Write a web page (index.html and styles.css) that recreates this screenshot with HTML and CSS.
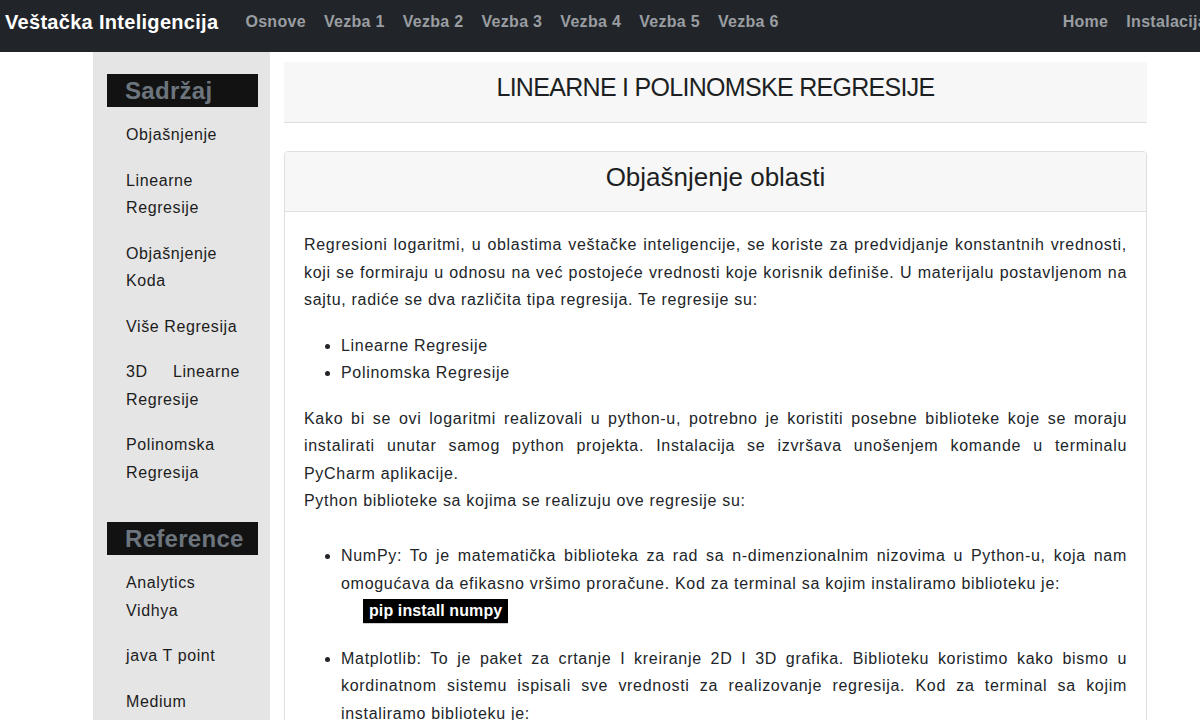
FILE: index.html
```html
<!DOCTYPE html>
<html lang="sr">
<head>
<meta charset="utf-8">
<title>Linearne i polinomske regresije</title>
<link rel="stylesheet" href="styles.css">
</head>
<body>
<nav class="topbar">
  <a class="brand" href="#">Veštačka Inteligencija</a>
  <ul class="nav-links">
    <li><a href="#">Osnove</a></li>
    <li><a href="#">Vezba 1</a></li>
    <li><a href="#">Vezba 2</a></li>
    <li><a href="#">Vezba 3</a></li>
    <li><a href="#">Vezba 4</a></li>
    <li><a href="#">Vezba 5</a></li>
    <li><a href="#">Vezba 6</a></li>
  </ul>
  <ul class="nav-links nav-right">
    <li><a href="#">Home</a></li>
    <li><a href="#">Instalacija</a></li>
  </ul>
</nav>

<div class="layout">
  <aside class="sidebar">
    <h3 class="side-title">Sadržaj</h3>
    <ul class="side-list">
      <li>Objašnjenje</li>
      <li>Linearne Regresije</li>
      <li>Objašnjenje Koda</li>
      <li>Više Regresija</li>
      <li>3D Linearne Regresije</li>
      <li>Polinomska Regresija</li>
    </ul>
    <h3 class="side-title side-title-ref">Reference</h3>
    <ul class="side-list">
      <li>Analytics Vidhya</li>
      <li>java T point</li>
      <li>Medium</li>
    </ul>
  </aside>

  <main class="content">
    <h1 class="page-title">LINEARNE I POLINOMSKE REGRESIJE</h1>

    <section class="card">
      <h2 class="card-header">Objašnjenje oblasti</h2>
      <div class="card-body">
        <p>Regresioni logaritmi, u oblastima veštačke inteligencije, se koriste za predvidjanje konstantnih vrednosti, koji se formiraju u odnosu na već postojeće vrednosti koje korisnik definiše. U materijalu postavljenom na sajtu, radiće se dva različita tipa regresija. Te regresije su:</p>
        <ul class="types">
          <li>Linearne Regresije</li>
          <li>Polinomska Regresije</li>
        </ul>
        <p class="tight">Kako bi se ovi logaritmi realizovali u python-u, potrebno je koristiti posebne biblioteke koje se moraju instalirati unutar samog python projekta. Instalacija se izvršava unošenjem komande u terminalu PyCharm aplikacije.<br>Python biblioteke sa kojima se realizuju ove regresije su:</p>
        <ul class="libs">
          <li>NumPy: To je matematička biblioteka za rad sa n-dimenzionalnim nizovima u Python-u, koja nam omogućava da efikasno vršimo proračune. Kod za terminal sa kojim instaliramo biblioteku je:
            <div class="cmd"><code>pip install numpy</code></div>
          </li>
          <li>Matplotlib: To je paket za crtanje I kreiranje 2D I 3D grafika. Biblioteku koristimo kako bismo u kordinatnom sistemu ispisali sve vrednosti za realizovanje regresija. Kod za terminal sa kojim instaliramo biblioteku je:
            <div class="cmd"><code>pip install matplotlib</code></div>
          </li>
          <li>Scikit-learn: To je biblioteka za mašinsko učenje koja sadrži gotove modele regresija. Kod za terminal sa kojim instaliramo biblioteku je:
            <div class="cmd"><code>pip install scikit-learn</code></div>
          </li>
        </ul>
      </div>
    </section>
  </main>
</div>
</body>
</html>
```

FILE: styles.css
```css
html, body {
  margin: 0;
  padding: 0;
  overflow-x: hidden;
}

body {
  font-family: "Liberation Sans", Arial, sans-serif;
  font-size: 16px;
  color: #212529;
  background: #ffffff;
}

/* ---------- top navigation ---------- */
.topbar {
  display: flex;
  align-items: flex-start;
  height: 52px;
  box-sizing: border-box;
  padding: 9px 0 0 5px;
  background: #212529;
}

.brand {
  font-size: 20px;
  font-weight: bold;
  line-height: 26px;
  color: #ffffff;
  text-decoration: none;
  letter-spacing: 0.3px;
  margin-right: 18px;
  white-space: nowrap;
}

.nav-links {
  display: flex;
  list-style: none;
  margin: 0;
  padding: 0;
}

.nav-links a {
  display: block;
  padding: 0 9px;
  font-size: 16px;
  font-weight: bold;
  line-height: 26px;
  letter-spacing: 0.3px;
  color: #9a9da1;
  text-decoration: none;
  white-space: nowrap;
}

.nav-right {
  margin-left: auto;
  margin-right: -16px;
  flex-shrink: 0;
}

/* ---------- page layout ---------- */
.layout {
  display: flex;
  gap: 14px;
  padding-left: 93px;
  min-height: 668px;
}

.sidebar {
  width: 177px;
  flex-shrink: 0;
  background: #e5e5e5;
  padding-top: 22px;
  box-sizing: border-box;
}

.side-title {
  box-sizing: border-box;
  width: 151px;
  height: 33px;
  margin: 0 0 14px 14px;
  padding-left: 18px;
  background: #121212;
  color: #6c757d;
  font-size: 24px;
  font-weight: bold;
  line-height: 33px;
  letter-spacing: 0.3px;
}

.side-title-ref {
  margin-top: 36px;
}

.side-list {
  list-style: none;
  margin: 0;
  padding: 0 0 0 33px;
}

.side-list li {
  width: 114px;
  margin-bottom: 18px;
  line-height: 27.5px;
  text-align: justify;
  letter-spacing: 0.6px;
  color: #1c1c1c;
}

.content {
  width: 863px;
  flex-shrink: 0;
  padding-top: 10px;
}

.page-title {
  margin: 0;
  padding: 10px 0 20px;
  background: #f7f7f7;
  border-bottom: 1px solid #dedede;
  text-align: center;
  font-size: 25px;
  font-weight: normal;
  line-height: 30px;
  letter-spacing: -0.7px;
  color: #1d1f22;
}

.card {
  margin-top: 28px;
  border: 1px solid #dfdfdf;
  border-radius: 4px;
  overflow: hidden;
}

.card-header {
  margin: 0;
  padding: 10px 0 19px;
  background: #f7f7f7;
  border-bottom: 1px solid #dfdfdf;
  text-align: center;
  font-size: 26px;
  font-weight: normal;
  line-height: 30px;
  color: #1d1f22;
}

.card-body {
  padding: 19px 19px 40px;
  line-height: 27.5px;
  letter-spacing: 0.7px;
  text-align: justify;
}

.card-body p {
  margin: 0 0 18px;
}

.card-body p.tight {
  margin-bottom: 0;
}

.types {
  margin: 0 0 18px;
  padding-left: 37px;
}

.libs {
  margin: 27.5px 0 0;
  padding-left: 37px;
}

.libs li {
  margin-bottom: 20px;
}

.cmd {
  padding-left: 22px;
}

.cmd code {
  display: inline-block;
  padding: 0 6px;
  background: #000000;
  border: 0 solid #cfcfcf;
  border-bottom-width: 1px;
  color: #ffffff;
  font-family: "Liberation Sans", Arial, sans-serif;
  font-size: 16px;
  font-weight: bold;
  line-height: 24px;
  letter-spacing: 0.1px;
}
```
